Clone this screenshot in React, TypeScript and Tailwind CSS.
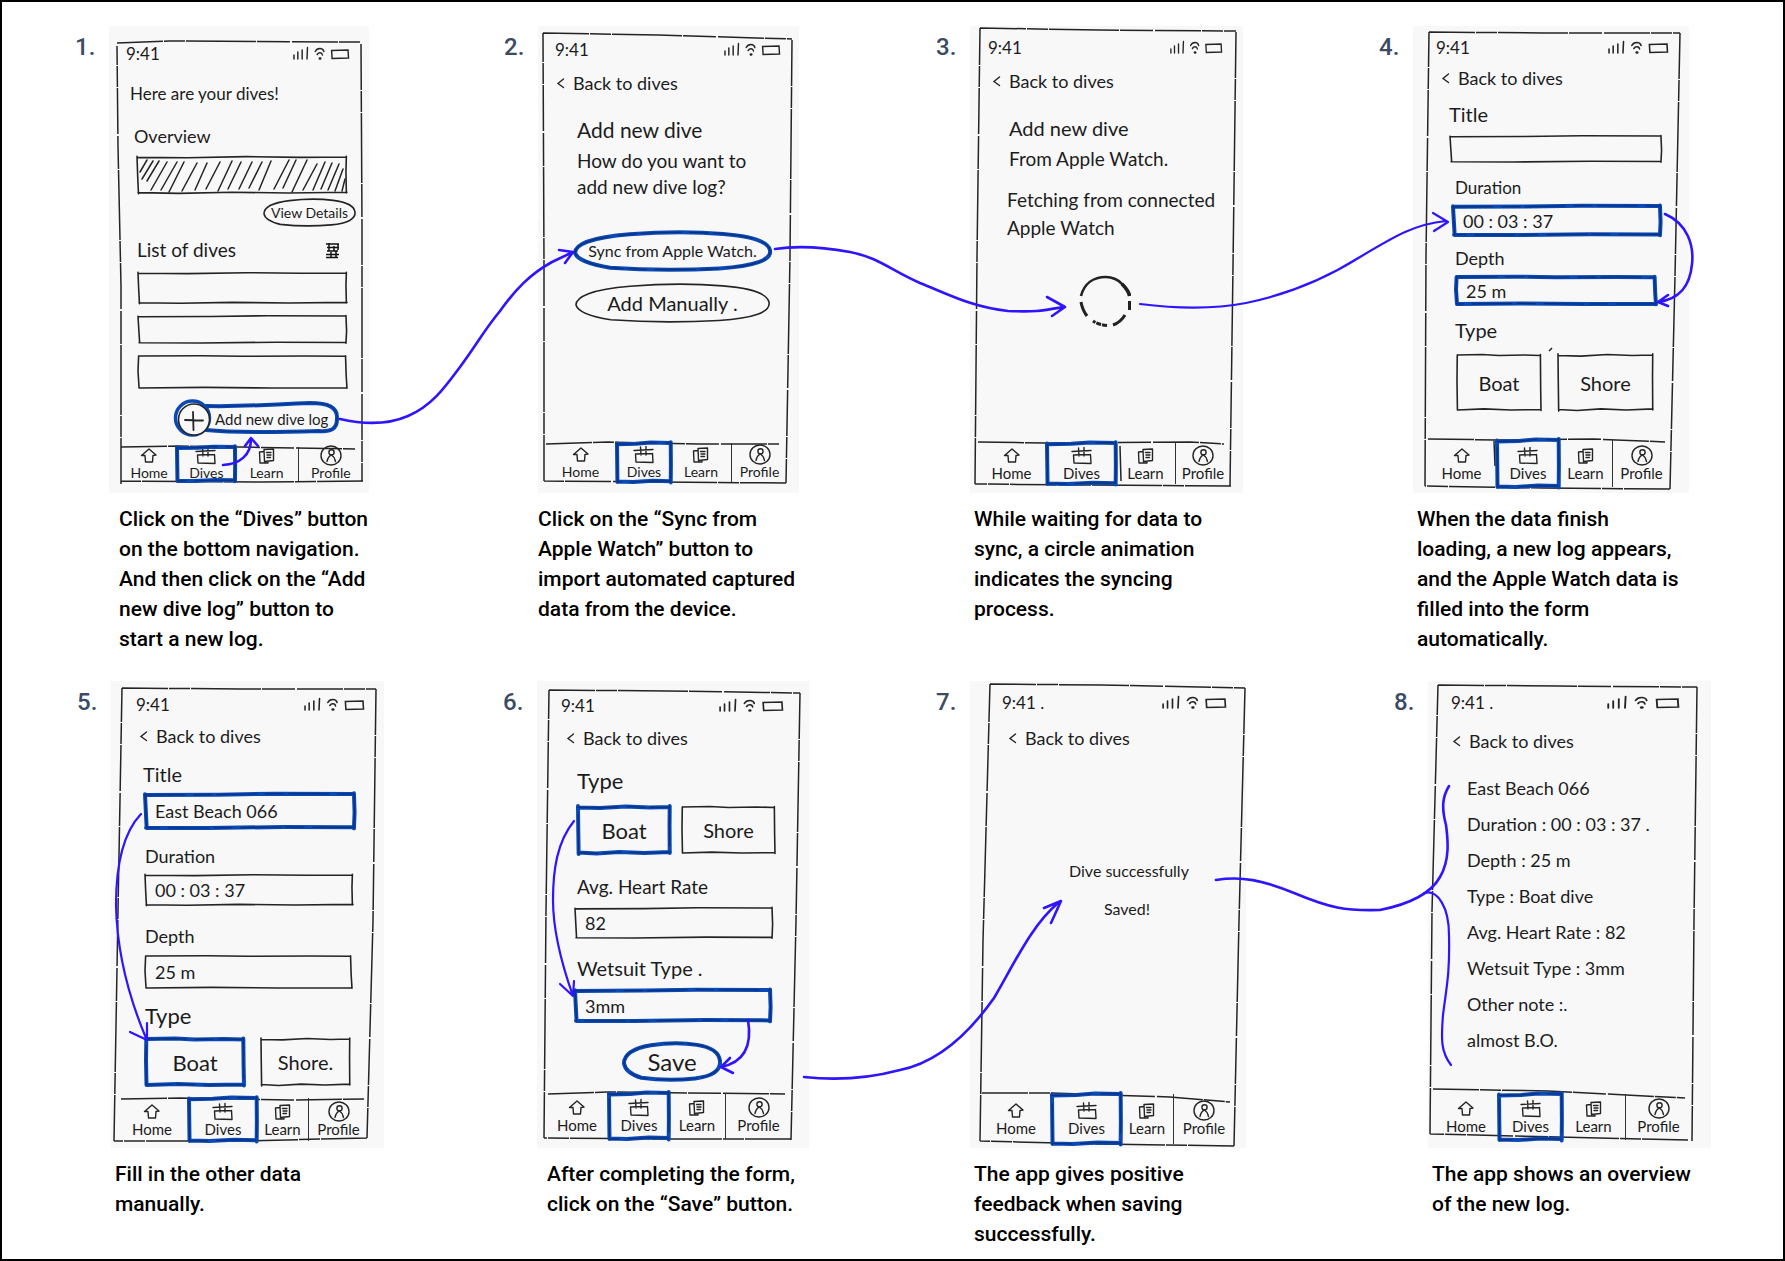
import React, { useId } from "react";

const INK = "#242424";
const MARKER = "#0b49b4";
const ARROW = "#2e14ff";

const BOX_PATHS = [
  "M0 1 L24 2 L52 -1 L78 1 L99.500 0 M99.700 -2 L99.500 40 L99.700 100 M100 98 L72 100 L45 98 L20 101 L.5 99 M.7 102 L.3 50 L0 -2",
  "M0 3 L35 2 L62 -1 L99.500 0 M99.500 -2 L99.800 55 L99.500 101 M99 98 L66 97 L30 100 L.5 99 M.8 100 L.4 52 L0 1",
  "M.5 0 L30 -1 L50 1 L80 0 L99 1 M99.300 -1 L99.600 60 L100 101 M100 99 L64 100 L32 98 L.5 100 M.5 100 L0 46 L.3 0",
];

const OVAL_PATH =
  "M0 55 C0 34 8 14 28 6 C45 -1 62 -1 76 5 C91 11 99 25 100 48 C101 74 92 90 74 96 C56 101 34 100 18 94 C8 86 1 72 0 55 Z";

type InkProps = { shape?: "box" | "oval"; variant?: number; marked?: boolean };

function Ink({ shape = "box", variant = 0, marked = false }: InkProps) {
  const d = shape === "oval" ? OVAL_PATH : BOX_PATHS[variant % 3];
  return (
    <svg
      className="pointer-events-none absolute inset-0 h-full w-full overflow-visible"
      viewBox="0 0 100 100"
      preserveAspectRatio="none"
      fill="none"
      strokeLinejoin="round"
      strokeLinecap="round"
      aria-hidden="true"
    >
      {marked ? (
        <>
          <path d={d} stroke={MARKER} strokeWidth="4" vectorEffect="non-scaling-stroke" />
          <path d={d} stroke="#08307f" strokeWidth="1.2" strokeDasharray="40 9 18 5" vectorEffect="non-scaling-stroke" />
        </>
      ) : (
        <path d={d} stroke={INK} strokeWidth="1.6" vectorEffect="non-scaling-stroke" />
      )}
    </svg>
  );
}

function StatusBar({ className, time = "9:41", icons = "w-[58px]" }: { className: string; time?: string; icons?: string }) {
  return (
    <div className={`flex h-5 items-center justify-between ${className}`}>
      <span className="text-[17px] leading-5 text-[#1c1c1c]">{time}</span>
      <svg className={`h-4 overflow-visible ${icons}`} viewBox="0 0 58 16" preserveAspectRatio="none" fill="none" stroke={INK} strokeWidth="1.5" strokeLinecap="round" aria-hidden="true">
        <path d="M1 9 V13 M5 6 V13 M9.500 4 V13 M15 1.500 L14.500 13" />
        <path d="M23 5.500 C25 1.500 31 1.500 32 5.500 M25 8.500 C26.500 6 30 6 30.500 9" />
        <path d="M27.800 12.500 h.4" strokeWidth="2.6" />
        <path d="M40 4.500 L57 4 L57.500 12 L40.500 12.500 Z" />
      </svg>
    </div>
  );
}

function BackLink({ className }: { className: string }) {
  return (
    <a href="#dives" className={`flex h-5 items-center gap-2 self-start text-[18px] leading-5 ${className}`}>
      <svg className="h-3 w-2 overflow-visible" viewBox="0 0 8 12" fill="none" stroke={INK} strokeWidth="1.4" strokeLinecap="round" aria-hidden="true">
        <path d="M6.500 2 L1 6.500 L6.500 10.500" />
      </svg>
      Back to dives
    </a>
  );
}

function NavIcon({ name }: { name: string }) {
  return (
    <svg className="h-[18px] w-6 shrink-0 overflow-visible" viewBox="0 0 24 18" fill="none" stroke={INK} strokeWidth="1.4" strokeLinecap="round" strokeLinejoin="round" aria-hidden="true">
      {name === "Home" && <path d="M8 8.500 H4.500 L12 2 L19 8 L16 8.500 M8 8.500 L8.500 15 L15.500 15 L16 8.500" />}
      {name === "Dives" && (
        <path d="M2 4.500 L21 3.500 M8.500 1 L9 9 M14 .5 L14 9 M3.500 8 L20.500 7.500 M3.500 8 L4 16 L21 16.500 L20.500 7.500" />
      )}
      {name === "Learn" && (
        <path d="M9 2.500 L18.500 2 L18.500 13.500 L9.500 14.500 Z M9 4.500 L4.500 5 L5 16 L13 16 V14.500 M11.500 5.500 H16 M12 8 H16 M12 10.500 H15.500" />
      )}
      {name === "Profile" && (
        <>
          <ellipse cx="12" cy="8.500" rx="10" ry="9.500" />
          <circle cx="12.500" cy="5.300" r="2.600" />
          <path d="M8 14.500 C8.500 11 10.500 9 12 8 M12.500 8 C15 9.500 16 12 16.500 14.500" />
        </>
      )}
    </svg>
  );
}

function BottomNav({ className }: { className: string }) {
  return (
    <nav className={`relative mt-auto grid shrink-0 leading-4 ${className}`}>
      {["Home", "Dives", "Learn", "Profile"].map((name) => (
        <button
          key={name}
          type="button"
          className={
            name === "Learn"
              ? "relative flex flex-col items-center justify-center border-r border-[#333]"
              : "relative flex flex-col items-center justify-center"
          }
        >
          {name === "Dives" && <Ink marked variant={1} />}
          <NavIcon name={name} />
          <span>{name}</span>
        </button>
      ))}
    </nav>
  );
}

function Field({
  label,
  value,
  labelClass,
  boxClass,
  marked,
  variant,
}: {
  label: string;
  value: string;
  labelClass: string;
  boxClass: string;
  marked?: boolean;
  variant?: number;
}) {
  const id = useId();
  return (
    <>
      <label htmlFor={id} className={`h-5 self-start leading-5 ${labelClass}`}>
        {label}
      </label>
      <div className={`relative shrink-0 ${boxClass}`}>
        <Ink marked={marked} variant={variant} />
        <input id={id} type="text" defaultValue={value} className="relative h-full w-full bg-transparent px-2.5 text-[18px] outline-none" />
      </div>
    </>
  );
}

function SketchButton({
  children,
  className,
  shape,
  marked,
  variant,
}: {
  children: React.ReactNode;
  className: string;
  shape?: "box" | "oval";
  marked?: boolean;
  variant?: number;
}) {
  return (
    <button type="button" className={`relative flex shrink-0 items-center justify-center whitespace-nowrap ${className}`}>
      <Ink shape={shape} marked={marked} variant={variant} />
      <span className="relative">{children}</span>
    </button>
  );
}

function DiveList() {
  return (
    <>
      <StatusBar className="mt-[18px] mr-5 ml-[17px]" icons="w-14" />
      <p className="mt-5 ml-[21px] text-[17px] leading-5">Here are your dives!</p>
      <p className="mt-[22px] ml-[25px] text-[18px] leading-5">Overview</p>
      <div className="relative mt-[11px] ml-7 h-9 w-[210px] shrink-0">
        <Ink />
        <svg className="absolute inset-0 h-full w-full" viewBox="0 0 210 36" preserveAspectRatio="none" stroke={INK} strokeWidth="1.5" fill="none" strokeLinecap="round" aria-hidden="true">
          <path d="M3 15 L10 3 M5 22 L16 4 M10 24 L22 4 M14 33 L30 5 M24 33 L40 5 M32 35 L47 5 M45 34 L60 6 M58 33 L70 6 M69 32 L83 5 M81 34 L95 4 M91 32 L104 5 M102 32 L115 5 M112 31 L125 5 M122 33 L134 4 M137 32 L152 3 M146 31 L159 3 M155 35 L170 3 M166 33 L180 7 M176 33 L188 5 M184 32 L195 6 M191 33 L202 7 M198 34 L206 12 M205 34 L208 22" />
        </svg>
      </div>
      <SketchButton shape="oval" className="mt-1.5 ml-[155px] h-[27px] w-[91px] text-[14px] leading-5">
        View Details
      </SketchButton>
      <div className="mt-3.5 mr-[29px] ml-7 flex h-5 items-center justify-between">
        <p className="text-[19px] leading-5">List of dives</p>
        <svg className="h-[17px] w-[15px]" viewBox="0 0 15 17" fill="none" stroke="#111" strokeWidth="1.5" aria-hidden="true">
          <path d="M1 2 H14 M2 5.500 H14 M2 9 H13 M1 12.500 H14 M1 15.500 H13 M4 1 V9 M9 4 V9 M13 2 V8 M6 10 V16 M11 9 V16" />
        </svg>
      </div>
      <div className="mt-[13px] ml-[29px] flex w-[209px] flex-col gap-[13px]">
        <div className="relative h-[30px]"><Ink variant={0} /></div>
        <div className="relative h-[27px]"><Ink variant={1} /></div>
        <div className="relative h-8"><Ink variant={2} /></div>
      </div>
      <button type="button" className="relative mt-[13px] ml-[67px] flex h-9 w-[162px] shrink-0 items-center text-[15px]">
        <svg className="absolute inset-0 h-full w-full overflow-visible" viewBox="0 0 162 36" preserveAspectRatio="none" fill="none" strokeLinecap="round" aria-hidden="true">
          <path d="M30 5 C70 6 100 3 134 2 C152 2 162 6 161 18 C161 28 155 31 143 30 C110 31 60 32 30 29" stroke={MARKER} strokeWidth="4" />
          <path d="M30 5 C70 6 100 3 134 2 C152 2 162 6 161 18 C161 28 155 31 143 30 C110 31 60 32 30 29" stroke="#08307f" />
          <circle cx="16.500" cy="17" r="17" stroke={MARKER} strokeWidth="3.500" />
          <circle cx="18" cy="18.500" r="15.500" fill="#f8f8f8" stroke={INK} strokeWidth="1.6" />
          <path d="M9 19 L27 19.500 M17 11 L17.500 29" stroke={INK} strokeWidth="1.800" />
        </svg>
        <span className="relative ml-[39px] whitespace-nowrap">Add new dive log</span>
      </button>
      <BottomNav className="mr-1.5 mb-3 ml-3 h-[34px] grid-cols-[56fr_58fr_63fr_64fr] text-[14px]" />
    </>
  );
}

function AddDive() {
  return (
    <>
      <StatusBar className="mt-3.5 mr-[19px] ml-[17px]" icons="w-14" />
      <BackLink className="mt-[13px] ml-[19px]" />
      <p className="mt-[27px] ml-[39px] text-[21px] leading-5">Add new dive</p>
      <p className="mt-2 ml-[39px] text-[19px] leading-[26px] whitespace-nowrap">
        How do you want to
        <br />
        add new dive log?
      </p>
      <SketchButton shape="oval" marked className="mt-8 ml-[37px] h-[38px] w-[195px] text-[16px]">
        Sync from Apple Watch.
      </SketchButton>
      <SketchButton shape="oval" className="mt-3.5 ml-[38px] h-[38px] w-[193px] text-[20px]">
        Add Manually .
      </SketchButton>
      <BottomNav className="mr-3 mb-[11px] ml-1.5 h-[39px] grid-cols-[73fr_54fr_61fr_55fr] text-[14px]" />
    </>
  );
}

function Syncing() {
  return (
    <>
      <StatusBar className="mt-3 mr-[21px] ml-[18px]" icons="w-[52px]" />
      <BackLink className="mt-[13px] ml-[23px]" />
      <p className="mt-[27px] ml-[39px] text-[20px] leading-5">Add new dive</p>
      <p className="mt-[11px] ml-[39px] text-[19px] leading-5">From Apple Watch.</p>
      <p className="mt-[17px] ml-[37px] text-[19px] leading-7 whitespace-nowrap">
        Fetching from connected
        <br />
        Apple Watch
      </p>
      <svg className="mt-[33px] ml-[109px] size-[52px]" viewBox="0 0 52 52" fill="none" stroke="#222" strokeWidth="3" role="img" aria-label="Syncing">
        <path d="M2 21 C5 9 14 2 27 2 C33 2 40 5 43 9 C48 14 50 17 50.500 21" strokeWidth="2.600" />
        <path d="M43 9 C47 13 50 17 50.500 21" strokeWidth="3.600" />
        <path d="M50.500 26 V35" />
        <path d="M46 40 C43 45 40 48 34 50" />
        <path d="M28 50.500 C23 50 18 49 14 46" strokeDasharray="5 1" />
        <path d="M2 27 C3 33 5 37 8 41" />
      </svg>
      <BottomNav className="mr-[13px] mb-[9px] ml-1.5 h-[41px] grid-cols-[71fr_69fr_60fr_54fr] text-[15px]" />
    </>
  );
}

function FormSynced() {
  return (
    <>
      <StatusBar className="mt-3 mr-[21px] ml-[23px]" icons="w-[60px]" />
      <BackLink className="mt-2.5 ml-[29px]" />
      <Field label="Title" value="" labelClass="mt-4 ml-[36px] text-[20px]" boxClass="mt-3 ml-[37px] h-[26px] w-[212px]" variant={1} />
      <Field label="Duration" value="00 : 03 : 37" labelClass="mt-4 ml-[42px] text-[17px]" boxClass="mt-2 ml-[40px] h-[29px] w-[208px]" marked variant={1} />
      <Field label="Depth" value="25 m" labelClass="mt-[13px] ml-[42px] text-[18px]" boxClass="mt-[9px] ml-[43px] h-[27px] w-[200px]" marked variant={2} />
      <p className="mt-4 ml-[42px] text-[20px] leading-5">Type</p>
      <div className="mt-[15px] ml-11 flex h-[55px] gap-[17px]">
        <SketchButton className="w-[84px] text-[20px]" variant={2}>Boat</SketchButton>
        <SketchButton className="w-[95px] text-[20px]">Shore</SketchButton>
      </div>
      <BottomNav className="mr-[19px] mb-1.5 ml-[13px] h-[47px] grid-cols-[71fr_62fr_54fr_57fr] text-[15px]" />
    </>
  );
}

function FormFilled() {
  return (
    <>
      <StatusBar className="mt-3.5 mr-5 ml-[25px]" icons="w-[60px]" />
      <BackLink className="mt-[11px] ml-[29px]" />
      <Field label="Title" value="East Beach 066" labelClass="mt-[18px] ml-[32px] text-[20px]" boxClass="mt-2.5 ml-[34px] h-[34px] w-[210px]" marked variant={1} />
      <Field label="Duration" value="00 : 03 : 37" labelClass="mt-[18px] ml-[34px] text-[18px]" boxClass="mt-[9px] ml-[34px] h-[30px] w-[208px]" variant={0} />
      <Field label="Depth" value="25 m" labelClass="mt-[21px] ml-[34px] text-[18px]" boxClass="mt-2.5 ml-[34px] h-8 w-[207px]" variant={2} />
      <p className="mt-[18px] ml-[34px] text-[22px] leading-5">Type</p>
      <div className="mt-[13px] ml-[35px] flex h-[46px] gap-[17px]">
        <SketchButton className="w-[98px] text-[22px]" marked variant={2}>Boat</SketchButton>
        <SketchButton className="w-[89px] text-[20px]" variant={0}>Shore.</SketchButton>
      </div>
      <BottomNav className="mr-4 mb-[7px] ml-1 h-[43px] grid-cols-[74fr_68fr_52fr_59fr] text-[15px]" />
    </>
  );
}

function FormDetails() {
  return (
    <>
      <StatusBar className="mt-[15px] mr-[26px] ml-6" icons="w-16" />
      <BackLink className="mt-3 ml-[30px]" />
      <p className="mt-[23px] ml-10 text-[22px] leading-5">Type</p>
      <div className="mt-4 ml-[41px] flex h-[46px] gap-3">
        <SketchButton className="w-[92px] text-[22px]" marked variant={0}>Boat</SketchButton>
        <SketchButton className="w-[93px] text-[20px]" variant={2}>Shore</SketchButton>
      </div>
      <Field label="Avg. Heart Rate" value="82" labelClass="mt-6 ml-10 text-[19px]" boxClass="mt-[11px] ml-[38px] h-[30px] w-[198px]" variant={1} />
      <Field label="Wetsuit Type ." value="3mm" labelClass="mt-5 ml-10 text-[20px]" boxClass="mt-3 ml-[38px] h-[31px] w-[196px]" marked variant={1} />
      <SketchButton shape="oval" marked className="mt-[22px] ml-[87px] h-[37px] w-24 text-[24px]">
        Save
      </SketchButton>
      <BottomNav className="mr-[18px] mb-[9px] ml-2 h-[46px] grid-cols-[64fr_60fr_57fr_65fr] text-[15px]" />
    </>
  );
}

function Saved() {
  return (
    <>
      <StatusBar className="mt-3 mr-5 ml-8" time="9:41 ." icons="w-16" />
      <BackLink className="mt-[15px] ml-[39px]" />
      <p className="mt-[104px] ml-[99px] w-[116px] text-center text-[16px] leading-[38px] whitespace-nowrap">
        Dive successfully
        <br />
        Saved!
      </p>
      <BottomNav className="mr-3 mb-1 ml-2.5 h-[50px] grid-cols-[72fr_69fr_53fr_60fr] text-[15px]" />
    </>
  );
}

const LOG_LINES = [
  "East Beach 066",
  "Duration : 00 : 03 : 37 .",
  "Depth : 25 m",
  "Type : Boat dive",
  "Avg. Heart Rate : 82",
  "Wetsuit Type : 3mm",
  "Other note :.",
  "almost B.O.",
];

function LogOverview() {
  return (
    <>
      <StatusBar className="mt-3 mr-8 ml-[23px]" time="9:41 ." icons="w-[72px]" />
      <BackLink className="mt-[18px] ml-[25px]" />
      <ul className="mt-[27px] ml-[39px] flex flex-col gap-4 text-[18px] leading-5">
        {LOG_LINES.map((line) => (
          <li key={line}>{line}</li>
        ))}
      </ul>
      <BottomNav className="mr-5 mb-2 ml-[5px] h-[46px] grid-cols-[66fr_63fr_64fr_65fr] text-[15px]" />
    </>
  );
}

type Step = {
  caption: string;
  captionClass: string;
  panelClass: string;
  frame: string;
  Screen: () => React.ReactElement;
};

const FIRST_ROW: Step[] = [
  {
    caption: "Click on the “Dives” button on the bottom navigation. And then click on the “Add new dive log” button to start a new log.",
    captionClass: "ml-2.5 pr-3",
    panelClass: "w-[260px]",
    frame: "M8 17 L60 15 L252 16 M252 18 L253 200 L253 455 M254 455 L150 456 L12 455 M12 458 L12 260 L9 120 L8 20 M12 421 L70 420 L246 423",
    Screen: DiveList,
  },
  {
    caption: "Click on the “Sync from Apple Watch” button to import automated captured data from the device.",
    captionClass: "ml-0",
    panelClass: "w-[261px]",
    frame: "M5 7 L120 9 L254 13 M254 14 L252 230 L248 457 M248 457 L120 456 L6 455 M6 455 L6 240 L5 7 M8 418 L70 416 L160 418 L241 418",
    Screen: AddDive,
  },
  {
    caption: "While waiting for data to sync, a circle animation indicates the syncing process.",
    captionClass: "ml-1",
    panelClass: "w-[273px]",
    frame: "M10 2 L130 4 L266 5 M266 6 L263 240 L260 460 M261 460 L110 459 L5 458 M5 458 L7 230 L10 2 M8 416 L80 417 L220 416 L254 418 M150 420 L151 455",
    Screen: Syncing,
  },
  {
    caption: "When the data finish loading, a new log appears, and the Apple Watch data is filled into the form automatically.",
    captionClass: "ml-1",
    panelClass: "w-[276px]",
    frame: "M16 6 L130 7 L267 7 M267 7 L262 250 L257 463 M257 463 L130 462 L12 460 M12 460 L13 230 L16 6 M15 413 L90 414 L180 413 L252 416 M139 322 L136 325 M81 415 L82 440",
    Screen: FormSynced,
  },
];

const SECOND_ROW: Step[] = [
  {
    caption: "Fill in the other data manually.",
    captionClass: "ml-1",
    panelClass: "w-[273px]",
    frame: "M11 7 L130 8 L265 8 M265 8 L262 240 L256 457 M256 457 L130 460 L3 460 M3 460 L7 230 L11 7 M10 418 L70 417 L180 419 L253 418",
    Screen: FormFilled,
  },
  {
    caption: "After completing the form, click on the “Save” button.",
    captionClass: "ml-2.5",
    panelClass: "w-[272px]",
    frame: "M12 9 L130 10 L263 12 M263 12 L259 240 L254 459 M254 458 L130 458 L7 457 M7 457 L9 230 L12 9 M11 413 L70 411 L248 413",
    Screen: FormDetails,
  },
  {
    caption: "The app gives positive feedback when saving successfully.",
    captionClass: "ml-1",
    panelClass: "w-[276px]",
    frame: "M20 3 L130 4 L275 7 M275 7 L269 240 L264 465 M264 465 L130 463 L10 460 M10 460 L13 260 L20 3 M12 412 L80 412 L200 416 L260 421",
    Screen: Saved,
  },
  {
    caption: "The app shows an overview of the new log.",
    captionClass: "ml-1",
    panelClass: "w-[283px]",
    frame: "M10 4 L130 5 L269 6 M269 6 L266 240 L264 460 M260 459 L130 456 L2 453 M2 453 L4 230 L10 4 M5 408 L120 410 L257 417",
    Screen: LogOverview,
  },
];

function StepCard({ step, number }: { step: Step; number: number }) {
  const { Screen } = step;
  return (
    <li className="flex items-start">
      <span className="mt-[7px] w-[34px] shrink-0 text-2xl leading-7 font-medium text-[#3c4b64]">{number}.</span>
      <div>
        <section
          className={`relative flex h-[467px] flex-col bg-[#f8f8f8] font-['Lato',sans-serif] text-[#1c1c1c] ${step.panelClass}`}
          aria-label={`Screen ${number}`}
        >
          <svg className="pointer-events-none absolute inset-0 h-full w-full" fill="none" stroke={INK} strokeWidth="1.5" strokeDasharray="46 1 21 1 70 1 33 2" aria-hidden="true">
            <path d={step.frame} />
          </svg>
          <Screen />
        </section>
        <p className={`mt-[11px] w-[268px] text-[21px] leading-[30px] font-medium text-black ${step.captionClass}`}>{step.caption}</p>
      </div>
    </li>
  );
}

function FlowArrows() {
  return (
    <svg
      className="pointer-events-none absolute inset-0 h-full w-full"
      viewBox="2 2 1781 1257"
      preserveAspectRatio="none"
      fill="none"
      stroke={ARROW}
      strokeWidth="2.6"
      strokeLinecap="round"
      strokeLinejoin="round"
      aria-hidden="true"
    >
      <path d="M223 465 C240 464 251 455 251 439 M245 446 L251 438 L258 446" />
      <path d="M340 419 C362 424 385 426 408 416 C432 406 446 386 460 367 C478 343 482 333 500 311 C515 290 530 274 552 262 L573 252 M559 250 L573 252 L565 263" />
      <path d="M775 249 C800 245 828 248 850 252 C880 258 890 270 920 283 C950 295 972 307 1008 311 C1035 312 1040 311 1064 307 M1047 297 L1065 307 L1052 316" />
      <path d="M1140 304 C1180 309 1215 309 1246 303 C1290 294 1325 279 1360 257 C1395 236 1415 224 1446 221 M1433 213 L1448 222 L1434 231" strokeWidth="2.2" />
      <path d="M1665 214 C1688 224 1694 246 1692 264 C1690 286 1680 299 1658 302 M1668 295 L1658 302 L1668 306" />
      <path d="M141 814 C122 834 116 870 116 905 C117 955 130 1000 146 1038 M130 1032 L147 1040 L147 1023" strokeWidth="2.2" />
      <path d="M574 821 C557 842 553 870 553 900 C553 930 562 965 573 996 M560 984 L573 996 L574 981" strokeWidth="2.2" />
      <path d="M748 1020 C752 1044 746 1062 721 1067 M730 1058 L721 1067 L733 1073" />
      <path d="M804 1077 C840 1081 870 1078 900 1070 C940 1062 970 1032 994 998 C1015 962 1032 925 1058 903 M1044 908 L1061 901 L1051 923" />
      <path d="M1216 880 C1242 876 1262 880 1294 893 C1330 908 1345 911 1380 910 C1405 905 1430 895 1440 877 C1450 860 1448 840 1446 825 C1441 806 1443 796 1449 786" />
      <path d="M1424 893 C1438 889 1449 908 1449 935 C1450 975 1446 990 1443 1015 C1441 1040 1441 1052 1451 1065" strokeWidth="2.2" />
    </svg>
  );
}

export default function App() {
  return (
    <main className="relative flex min-h-screen flex-col gap-[27px] border-2 border-black bg-white pt-6 font-['Roboto',sans-serif]">
      <ol className="grid grid-cols-[429fr_432fr_443fr_404fr] pl-[73px]">
        {FIRST_ROW.map((step, i) => (
          <StepCard key={step.caption} step={step} number={i + 1} />
        ))}
      </ol>
      <ol className="grid grid-cols-[426fr_433fr_458fr_389fr] pl-[75px]" start={5}>
        {SECOND_ROW.map((step, i) => (
          <StepCard key={step.caption} step={step} number={i + 5} />
        ))}
      </ol>
      <FlowArrows />
    </main>
  );
}
